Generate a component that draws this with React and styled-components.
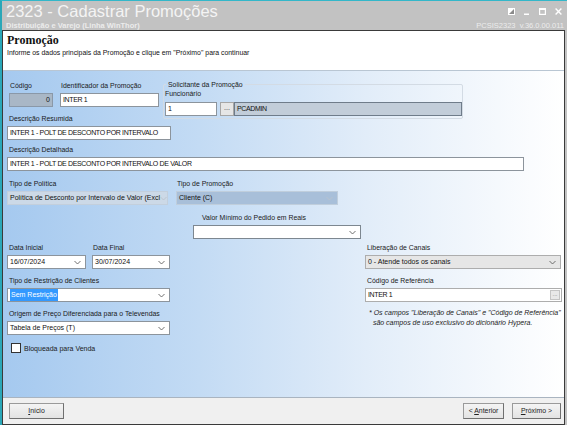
import React from "react";
import styled, { createGlobalStyle } from "styled-components";

const Global = createGlobalStyle`
  html, body { margin: 0; padding: 0; }
  body { width: 567px; height: 425px; overflow: hidden; font-family: "Liberation Sans", Arial, sans-serif; }
  * { box-sizing: border-box; }
`;

const Window = styled.div`
  width: 567px;
  height: 425px;
  display: flex;
  flex-direction: column;
  border-top: 1px solid #33b7c9;
  border-left: 2px solid #2aa7b8;
  background: #c2c2c2;
  overflow: hidden;
`;

const TitleBar = styled.div`
  height: 29px;
  display: flex;
  justify-content: space-between;
  padding: 0 4px 0 4px;
  color: #f4f4f4;
`;

const TitleBlock = styled.div`
  display: flex;
  flex-direction: column;
`;

const Title = styled.div`
  font-size: 16.5px;
  line-height: 19px;
  margin-top: 1px;
`;

const SubTitle = styled.div`
  font-size: 7.5px;
  font-weight: bold;
  line-height: 9px;
  color: #ececec;
`;

const RightBlock = styled.div`
  display: flex;
  flex-direction: column;
  align-items: flex-end;
  margin-right: -1px;
`;

const Controls = styled.div`
  display: flex;
  gap: 9px;
  margin-top: 6px;
  height: 8px;
  align-items: center;
  margin-right: 2px;
`;

const Version = styled.div`
  font-size: 7.5px;
  line-height: 9px;
  margin-top: 6px;
  color: #ececec;
  white-space: nowrap;
`;

const Frame = styled.div`
  flex: 1;
  display: flex;
  flex-direction: column;
  margin-right: 2px;
  border: 1px solid #3a3a3a;
  background: #f0f0f0;
`;

const Header = styled.div`
  height: 40px;
  background: #ffffff;
  padding: 2px 4px;
  border-bottom: 1px solid #b9c6d3;
`;

const HeaderTitle = styled.div`
  font-family: "Liberation Serif", "Times New Roman", serif;
  font-weight: bold;
  font-size: 12px;
  line-height: 14px;
  color: #111;
`;

const HeaderText = styled.div`
  font-size: 6.9px;
  line-height: 9px;
  margin-top: 1px;
  color: #111;
`;

const Body = styled.div`
  flex: 1;
  background: linear-gradient(to right, #a5c9ef 0%, #c3dbf4 35%, #e2edf9 65%, #ffffff 100%);
  padding: 10px 4px 0 4px;
  display: flex;
  flex-direction: column;
  font-size: 7px;
  color: #1a1a1a;
`;

const Row = styled.div`
  display: flex;
  align-items: flex-start;
  gap: ${(p) => p.$gap ?? 6}px;
  margin-top: ${(p) => p.$mt ?? 0}px;
  margin-left: ${(p) => p.$ml ?? 0}px;
`;

const Col = styled.div`
  display: flex;
  flex-direction: column;
  width: ${(p) => (p.$w ? p.$w + "px" : "auto")};
  flex: none;
  margin-top: ${(p) => p.$mt ?? 0}px;
  margin-left: ${(p) => p.$ml ?? 0}px;
`;

const Label = styled.div`
  font-size: 6.9px;
  line-height: 9px;
  height: 9px;
  padding-left: ${(p) => p.$pl ?? 1}px;
  margin-bottom: ${(p) => p.$mb ?? 3}px;
  white-space: nowrap;
`;

const Input = styled.div`
  width: ${(p) => p.$w}px;
  flex: none;
  height: 14px;
  border: 1px solid ${(p) => p.$border || "#8c949c"};
  background: ${(p) => p.$bg || "#ffffff"};
  font-size: 7px;
  line-height: 12px;
  padding: 0 2px;
  display: flex;
  align-items: center;
  justify-content: ${(p) => (p.$right ? "flex-end" : "space-between")};
  white-space: nowrap;
  overflow: hidden;
  color: #111;
`;

const Caps = styled.span`
  letter-spacing: -0.35px;
`;

const Arrow = ({ faint }) => (
  <svg width="7" height="5" viewBox="0 0 7 5" style={{ flex: "none", marginRight: 2 }}>
    <path d="M0.5 1 L3.5 4 L6.5 1" fill="none" stroke={faint ? "#b9c3cd" : "#606060"} strokeWidth="0.9" />
  </svg>
);

const Highlight = styled.span`
  background: #3399ff;
  color: #fff;
  padding: 0 1px;
`;

const GroupBox = styled.fieldset`
  margin: -1px 0 0 0;
  width: 300px;
  height: 39px;
  border: 1px solid #d3dbe4;
  border-radius: 2px;
  padding: 0;
`;

const Legend = styled.legend`
  font-size: 6.9px;
  line-height: 9px;
  padding: 0 2px;
  margin-left: 2px;
`;

const GroupInner = styled.div`
  display: flex;
  flex-direction: column;
  padding-left: 1px;
`;

const SmallBtn = styled.div`
  width: 14px;
  height: 14px;
  border: 1px solid #a6a6a6;
  background: #e6e6e6;
  font-size: 7px;
  line-height: 10px;
  text-align: center;
  color: #333;
  margin: 0 0 0 3px;
`;

const EmbeddedBtn = styled.div`
  width: 10px;
  height: 10px;
  background: #e8e8e8;
  border: 1px solid #c4c4c4;
  font-size: 6px;
  line-height: 6px;
  text-align: center;
  color: #777;
  margin-right: -1px;
`;

const Note = styled.div`
  font-style: italic;
  font-size: 7px;
  line-height: 10px;
  color: #222;
  margin: 6px 0 0 4px;
`;

const CheckRow = styled.label`
  display: flex;
  align-items: center;
  gap: 3px;
  margin: 8px 0 0 4px;
  font-size: 7px;
`;

const Box = styled.span`
  width: 10px;
  height: 10px;
  border: 1px solid #333;
  background: #fff;
`;

const Footer = styled.div`
  height: 27px;
  border-top: 1px solid #a9b4c0;
  display: flex;
  align-items: center;
  justify-content: space-between;
  padding: 0 3px 0 6px;
`;

const Buttons = styled.div`
  display: flex;
  gap: 8px;
`;

const Button = styled.div`
  width: ${(p) => p.$w}px;
  height: 16px;
  border: 1px solid #9a9a9a;
  border-right-color: #707070;
  border-bottom-color: #707070;
  background: linear-gradient(#f4f4f4, #e3e3e3);
  font-size: 6.9px;
  line-height: 14px;
  text-align: center;
  color: #222;
  white-space: nowrap;
  & u { text-decoration: underline; }
`;

const Spacer = styled.div`
  width: ${(p) => p.$w}px;
  flex: none;
`;

export default function App() {
  return (
    <>
      <Global />
      <Window>
        <TitleBar>
          <TitleBlock>
            <Title>2323 - Cadastrar Promoções</Title>
            <SubTitle>Distribuição e Varejo (Linha WinThor)</SubTitle>
          </TitleBlock>
          <RightBlock>
            <Controls>
              <svg width="7" height="7" viewBox="0 0 7 7">
                <rect x="0.5" y="0.5" width="6" height="6" fill="#fff" stroke="#fff" />
                <path d="M1 6 L6 1 L6 6 Z" fill="#8a8a8a" />
              </svg>
              <svg width="6" height="7" viewBox="0 0 6 7">
                <rect x="0" y="5.5" width="5" height="1.5" fill="#fff" />
              </svg>
              <svg width="7" height="7" viewBox="0 0 7 7">
                <rect x="0.6" y="0.6" width="5.8" height="5.8" fill="none" stroke="#fff" strokeWidth="1.2" />
                <rect x="0" y="0" width="7" height="2" fill="#fff" />
              </svg>
              <svg width="7" height="7" viewBox="0 0 7 7">
                <path d="M0.6 0.6 L6.4 6.4 M6.4 0.6 L0.6 6.4" stroke="#fff" strokeWidth="1.4" />
              </svg>
            </Controls>
            <Version>PCSIS2323&nbsp;&nbsp;v.36.0.00.011</Version>
          </RightBlock>
        </TitleBar>
        <Frame>
          <Header>
            <HeaderTitle>Promoção</HeaderTitle>
            <HeaderText>Informe os dados principais da Promoção e clique em "Próximo" para continuar</HeaderText>
          </Header>
          <Body>
            <Row $gap={0}>
              <Col $w={156}>
                <Row $gap={7} $ml={2}>
                  <Col>
                    <Label>Código</Label>
                    <Input $w={44} $bg="#a9b7c6" $border="#8a98a8" $right>0</Input>
                  </Col>
                  <Col>
                    <Label>Identificador da Promoção</Label>
                    <Input $w={99}>
                      <Caps>INTER 1</Caps>
                    </Input>
                  </Col>
                </Row>
                <Col $mt={7}>
                  <Label $pl={2}>Descrição Resumida</Label>
                  <Input $w={164}>
                    <Caps>INTER 1 - POLT DE DESCONTO POR INTERVALO</Caps>
                  </Input>
                </Col>
              </Col>
              <GroupBox>
                <Legend>Solicitante da Promoção</Legend>
                <GroupInner>
                  <Label $pl={0} $mb={4}>Funcionário</Label>
                  <Row $gap={0}>
                    <Input $w={52}>1</Input>
                    <SmallBtn>...</SmallBtn>
                    <Input $w={228} $bg="#c2cdd9" $border="#6f7c8a">
                      <Caps>PCADMIN</Caps>
                    </Input>
                  </Row>
                </GroupInner>
              </GroupBox>
            </Row>
            <Col $mt={5}>
              <Label $pl={2}>Descrição Detalhada</Label>
              <Input $w={517}>
                <Caps>INTER 1 - POLT DE DESCONTO POR INTERVALO DE VALOR</Caps>
              </Input>
            </Col>
            <Row $mt={8} $gap={8}>
              <Col>
                <Label $pl={2}>Tipo de Política</Label>
                <Input $w={161} $bg="#ccd9e7" $border="#c3cfdc">
                  <span>Política de Desconto por Intervalo de Valor (Excl</span>
                  <Arrow faint />
                </Input>
              </Col>
              <Col>
                <Label $pl={1}>Tipo de Promoção</Label>
                <Input $w={162} $bg="#a8bfd9" $border="#c0cedc">
                  <span>Cliente (C)</span>
                  <Arrow faint />
                </Input>
              </Col>
            </Row>
            <Col $mt={8} $ml={186}>
              <Label $pl={9}>Valor Mínimo do Pedido em Reais</Label>
              <Input $w={168} $border="#7d8790">
                <span />
                <Arrow />
              </Input>
            </Col>
            <Row $mt={4} $gap={0}>
              <Row $gap={6}>
                <Col>
                  <Label $pl={2}>Data Inicial</Label>
                  <Input $w={79}>
                    <span>16/07/2024</span>
                    <Arrow />
                  </Input>
                </Col>
                <Col>
                  <Label $pl={1}>Data Final</Label>
                  <Input $w={78}>
                    <span>30/07/2024</span>
                    <Arrow />
                  </Input>
                </Col>
              </Row>
              <Spacer $w={195} />
              <Col>
                <Label $pl={2}>Liberação de Canais</Label>
                <Input $w={196} $bg="#e6e6e6" $border="#adadad">
                  <span>0 - Atende todos os canais</span>
                  <Arrow />
                </Input>
              </Col>
            </Row>
            <Row $mt={7} $gap={0}>
              <Col>
                <Col>
                  <Label $pl={2}>Tipo de Restrição de Clientes</Label>
                  <Input $w={163}>
                    <Highlight>Sem Restrição</Highlight>
                    <Arrow />
                  </Input>
                </Col>
                <Col $mt={7}>
                  <Label $pl={2}>Origem de Preço Diferenciada para o Televendas</Label>
                  <Input $w={163}>
                    <span>Tabela de Preços (T)</span>
                    <Arrow />
                  </Input>
                </Col>
                <CheckRow>
                  <Box />
                  Bloqueada para Venda
                </CheckRow>
              </Col>
              <Spacer $w={195} />
              <Col>
                <Label $pl={2}>Código de Referência</Label>
                <Input $w={197} $border="#adadad">
                  <Caps>INTER 1</Caps>
                  <EmbeddedBtn>...</EmbeddedBtn>
                </Input>
                <Note>
                  * Os campos "Liberação de Canais" e "Código de Referência"
                  <br />
                  &nbsp;&nbsp;são campos de uso exclusivo do dicionário Hypera.
                </Note>
              </Col>
            </Row>
          </Body>
          <Footer>
            <Button $w={55}>
              <u>I</u>nício
            </Button>
            <Buttons>
              <Button $w={41}>
                &lt; <u>A</u>nterior
              </Button>
              <Button $w={49}>
                <u>P</u>róximo &gt;
              </Button>
            </Buttons>
          </Footer>
        </Frame>
      </Window>
    </>
  );
}
